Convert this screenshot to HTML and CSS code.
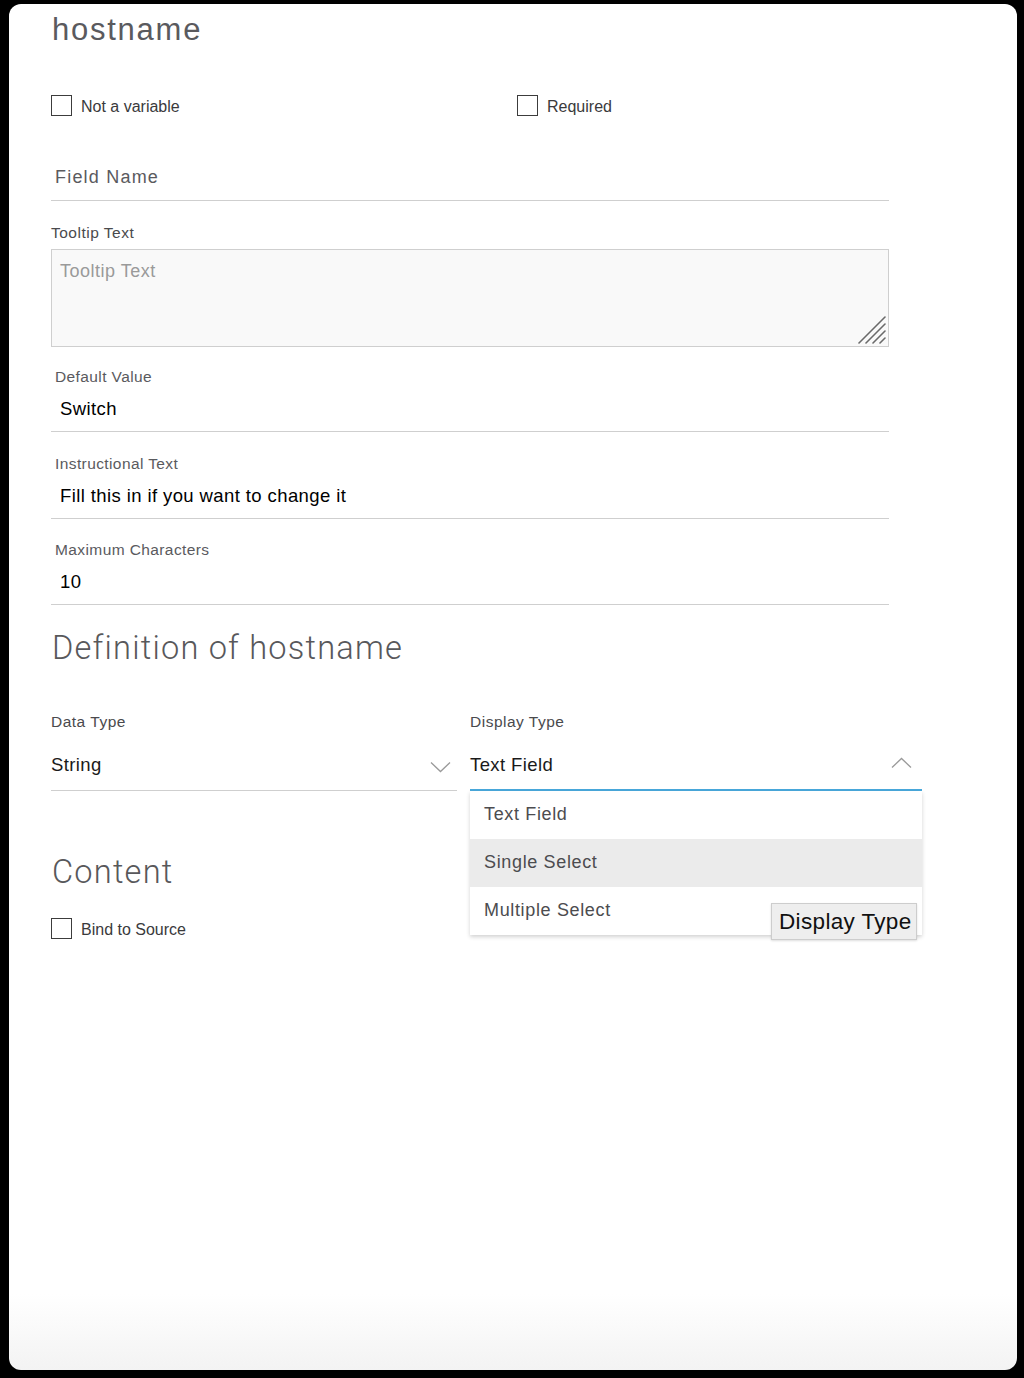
FILE: index.html
```html
<!DOCTYPE html>
<html lang="en">
<head>
<meta charset="utf-8">
<title>hostname</title>
<link rel="stylesheet" href="styles.css">
</head>
<body>
<div class="panel">
  <h1 class="title">hostname</h1>

  <div class="checks">
    <label class="check check-first"><span class="box"></span><span class="check-text">Not a variable</span></label>
    <label class="check"><span class="box"></span><span class="check-text">Required</span></label>
  </div>

  <div class="field-name">Field Name</div>

  <div class="label tooltip-label">Tooltip Text</div>
  <div class="textarea">
    <span class="placeholder">Tooltip Text</span>
    <svg class="grip" width="28" height="28" viewBox="0 0 28 28">
      <g stroke="#6a6a6a" stroke-width="1.6" stroke-linecap="round">
        <line x1="1" y1="27" x2="27" y2="1"/>
        <line x1="8" y1="27" x2="27" y2="8"/>
        <line x1="15" y1="27" x2="27" y2="15"/>
        <line x1="22" y1="27" x2="27" y2="22"/>
      </g>
    </svg>
  </div>

  <div class="group group-first">
    <div class="group-label">Default Value</div>
    <div class="group-value">Switch</div>
  </div>
  <div class="group">
    <div class="group-label">Instructional Text</div>
    <div class="group-value">Fill this in if you want to change it</div>
  </div>
  <div class="group group-last">
    <div class="group-label">Maximum Characters</div>
    <div class="group-value">10</div>
  </div>

  <h2 class="section definition">Definition of hostname</h2>

  <div class="selects">
    <div class="select select-left">
      <div class="label">Data Type</div>
      <div class="select-control">
        <span>String</span>
        <svg class="chev" width="21" height="12" viewBox="0 0 21 12"><polyline points="1,1.5 10.5,10.5 20,1.5" fill="none" stroke="#9a9a9a" stroke-width="1.3"/></svg>
      </div>
    </div>
    <div class="select select-right">
      <div class="label">Display Type</div>
      <div class="select-control open">
        <span>Text Field</span>
        <svg class="chev chev-up" width="21" height="12" viewBox="0 0 21 12"><polyline points="1,10.5 10.5,1.5 20,10.5" fill="none" stroke="#9a9a9a" stroke-width="1.3"/></svg>
      </div>
      <ul class="menu">
        <li class="menu-item">Text Field</li>
        <li class="menu-item active">Single Select</li>
        <li class="menu-item">Multiple Select</li>
      </ul>
      <div class="tip">Display Type</div>
    </div>
  </div>

  <h2 class="section content-title">Content</h2>

  <label class="check bind"><span class="box"></span><span class="check-text">Bind to Source</span></label>
</div>
</body>
</html>
```
FILE: styles.css
```css
html, body {
  margin: 0;
  padding: 0;
  background: #000;
}

body {
  font-family: "Liberation Sans", Arial, sans-serif;
  color: #333;
  padding: 4px 7px 8px 9px;
}

.panel {
  box-sizing: border-box;
  height: 1366px;
  border-radius: 12px;
  background: linear-gradient(to bottom, #ffffff 0, #ffffff 1290px, #f3f3f3 1366px);
  padding-left: 42px;
  display: flex;
  flex-direction: column;
  align-items: flex-start;
}

.title {
  margin: 8px 0 0 0;
  font-family: "Liberation Sans", Arial, sans-serif;
  font-weight: 400;
  font-size: 31px;
  line-height: 36px;
  letter-spacing: 1.75px;
  color: #5a5a5e;
  padding-left: 1px;
}

.checks {
  margin-top: 47px;
  display: flex;
  width: 838px;
}

.check {
  display: flex;
  align-items: center;
  height: 20px;
  gap: 9px;
  font-size: 16px;
  color: #3a3a3c;
}

.check-first {
  width: 466px;
}

.box {
  box-sizing: border-box;
  width: 21px;
  height: 21px;
  border: 1px solid #3c3c3c;
  background: #fff;
}

.check-text {
  line-height: 20px;
  padding-top: 3px;
}

.field-name {
  margin-top: 49px;
  width: 838px;
  box-sizing: border-box;
  padding: 1px 0 11px 4px;
  font-size: 18px;
  line-height: 24px;
  letter-spacing: 1.2px;
  color: #5a5a5e;
  border-bottom: 1px solid #cfcfcf;
}

.label {
  font-size: 15.5px;
  line-height: 20px;
  letter-spacing: 0.5px;
  color: #4a4a4d;
}

.tooltip-label {
  margin-top: 22px;
}

.textarea {
  position: relative;
  margin-top: 6px;
  box-sizing: border-box;
  width: 838px;
  height: 98px;
  background: #f9f9f9;
  border: 1px solid #cfcfcf;
  padding: 10px 8px;
}

.placeholder {
  font-size: 18px;
  line-height: 22px;
  letter-spacing: 0.5px;
  color: #9a9a9a;
}

.grip {
  position: absolute;
  right: 2px;
  bottom: 2px;
}

.group {
  margin-top: 22px;
  width: 838px;
  box-sizing: border-box;
  padding-bottom: 10px;
  border-bottom: 1px solid #cfcfcf;
}

.group-first {
  margin-top: 20px;
}

.group-last {
  margin-top: 21px;
}

.group-label {
  padding-left: 4px;
  font-size: 15.5px;
  line-height: 20px;
  letter-spacing: 0.4px;
  color: #5a5a5e;
}

.group-value {
  margin-top: 10px;
  padding-left: 9px;
  font-size: 18.5px;
  line-height: 24px;
  letter-spacing: 0.4px;
  color: #000;
}

.section {
  margin: 20px 0 0 0;
  font-family: Roboto, "Liberation Sans", sans-serif;
  font-weight: 300;
  font-size: 32.6px;
  line-height: 40px;
  letter-spacing: 1.2px;
  color: #58585b;
  padding-left: 1px;
}

.definition {
  margin-top: 23px;
}

.selects {
  margin-top: 44px;
  display: flex;
  gap: 13px;
}

.select {
  position: relative;
  display: flex;
  flex-direction: column;
}

.select-left {
  width: 406px;
}

.select-right {
  width: 452px;
}

.select-control {
  margin-top: 20px;
  display: flex;
  align-items: center;
  justify-content: space-between;
  box-sizing: border-box;
  height: 39px;
  padding: 0 6px 14px 0;
  font-size: 18.5px;
  line-height: 24px;
  letter-spacing: 0.4px;
  color: #1a1a1a;
  border-bottom: 1px solid #cfcfcf;
}

.select-control span {
  padding-top: 1px;
}

.select-control .chev {
  margin-top: 6px;
}

.select-control.open {
  border-bottom: 2px solid #49a9dc;
  padding-right: 10px;
  padding-bottom: 13px;
}

.select-control.open .chev {
  margin-top: -2px;
}

.menu {
  position: absolute;
  top: 79px;
  left: 0;
  width: 452px;
  margin: 0;
  padding: 0;
  list-style: none;
  background: #fff;
  box-shadow: 0 2px 4px rgba(0, 0, 0, 0.18);
}

.menu-item {
  height: 48px;
  line-height: 46px;
  padding-left: 14px;
  font-size: 18px;
  letter-spacing: 0.65px;
  color: #4c4c4f;
}

.menu-item.active {
  background: #ebebeb;
}

.tip {
  position: absolute;
  left: 301px;
  top: 191px;
  box-sizing: border-box;
  width: 146px;
  height: 37px;
  padding-left: 7px;
  background: #eeeeee;
  border: 1px solid #cdcdcd;
  box-shadow: 0 1px 2px rgba(0, 0, 0, 0.12);
  font-size: 22.5px;
  line-height: 35px;
  letter-spacing: 0.35px;
  color: #111;
  white-space: nowrap;
}

.content-title {
  margin-top: 61px;
}

.bind {
  margin-top: 26px;
}
```
